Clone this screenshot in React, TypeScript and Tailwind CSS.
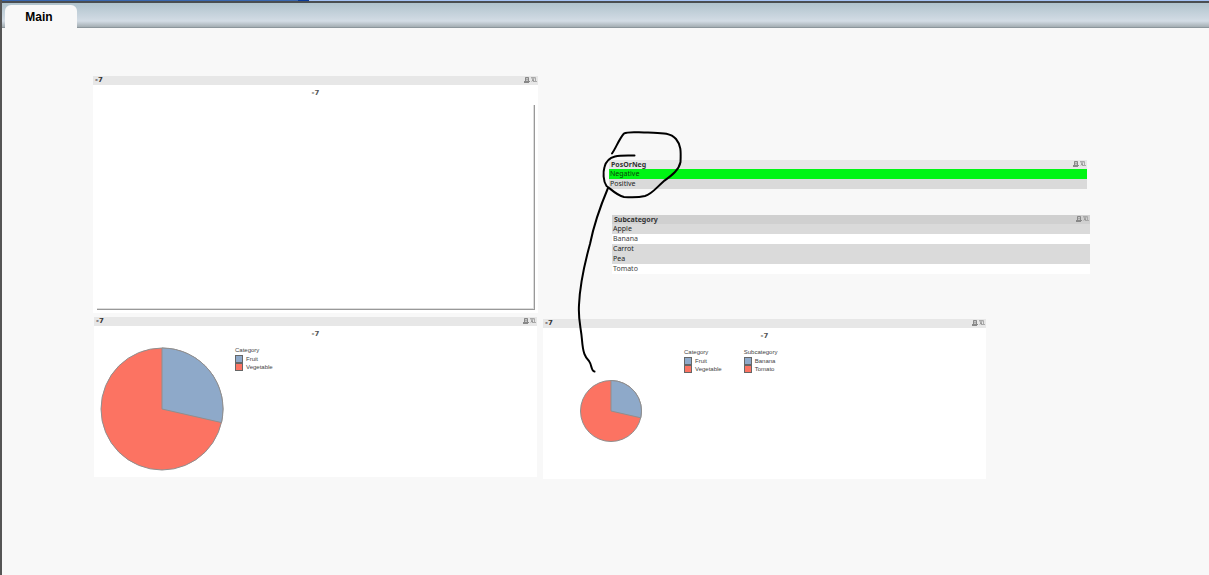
import { useState } from 'react'
import type { ReactNode } from 'react'

interface LegendGroup {
  title: string
  items: string[]
}

const swatches = ['bg-[#8ea9c9]', 'bg-[#fc7362]']

function PrintIcon() {
  return (
    <svg viewBox="0 0 6 6" className="h-[6px] w-[6px]" fill="none" stroke="#888">
      <path d="M1 0h4v4H1z" fill="#c4c4c4" stroke="none" />
      <path d="M1.500 4V.5h3V4" />
      <path d="M0 4.500h6M0 5.500h5" />
      <path d="M2 2.500h2" stroke="#aaa" />
    </svg>
  )
}

function ExcelIcon() {
  return (
    <svg viewBox="0 0 6 6" className="h-[6px] w-[6px]" fill="none" stroke="#aaa">
      <path d="M0 .5h4.500v4M2 4.500h4" />
      <path d="M.8 1l2.400 3.500M3.200 1L.8 4.500" stroke="#999" />
    </svg>
  )
}

function Caption({ title, className }: { title: string; className: string }) {
  return (
    <header className={`flex h-[9px] items-start justify-between pr-px ${className}`}>
      <h2 className="text-[7px] leading-[9px] font-bold text-[#333]">{title}</h2>
      <div className="flex gap-px pt-px">
        <button type="button" aria-label="Print">
          <PrintIcon />
        </button>
        <button type="button" aria-label="Send to Excel">
          <ExcelIcon />
        </button>
      </div>
    </header>
  )
}

function ChartPanel({ className, children }: { className: string; children: ReactNode }) {
  return (
    <section className={`flex flex-col bg-white font-['DejaVu_Sans',sans-serif] ${className}`}>
      <Caption title="-7" className="bg-[#e7e7e7] pl-[2px]" />
      <h3 className="pt-[4px] text-center text-[7px] leading-[9px] font-bold text-[#555]">-7</h3>
      {children}
    </section>
  )
}

// 2 of 7 goes to the first slice, the rest to the second
function Pie({ className }: { className: string }) {
  const angle = (2 / 7) * 2 * Math.PI
  const x = 62 + 61 * Math.sin(angle)
  const y = 62 - 61 * Math.cos(angle)

  return (
    <svg viewBox="0 0 124 124" className={className} stroke="#8f8f8f" strokeWidth="1">
      <circle cx="62" cy="62" r="61" fill="#fc7362" vectorEffect="non-scaling-stroke" />
      <path d={`M62 62V1A61 61 0 0 1 ${x} ${y}Z`} fill="#8ea9c9" vectorEffect="non-scaling-stroke" />
    </svg>
  )
}

function Legend({ title, items }: LegendGroup) {
  return (
    <div className="font-['Liberation_Sans',sans-serif] text-[6px] leading-[8px] text-[#444]">
      <p>{title}</p>
      <ul className="pt-px">
        {items.map((item, i) => (
          <li key={item} className="flex h-[8px] items-center gap-[3px]">
            <span className={`h-[8px] w-[8px] border border-[#666] ${swatches[i]}`} />
            {item}
          </li>
        ))}
      </ul>
    </div>
  )
}

interface ListBoxProps {
  title: string
  items: string[]
  excluded: string[]
  selected?: string
  captionClass: string
  className: string
  onSelect?: (item: string) => void
}

function ListBox({ title, items, excluded, selected, captionClass, className, onSelect }: ListBoxProps) {
  return (
    <section className={className}>
      <Caption title={title} className={captionClass} />
      <ul>
        {items.map((item) => (
          <li key={item}>
            <button
              type="button"
              onClick={() => onSelect?.(item)}
              className={`block h-[10px] w-full pl-px text-left text-[7px] leading-[10px] ${
                item === selected
                  ? 'bg-[#00f514] text-[#0c400c]'
                  : excluded.includes(item)
                    ? 'bg-[#dadada] text-[#222]'
                    : 'bg-white text-[#444]'
              }`}
            >
              {item}
            </button>
          </li>
        ))}
      </ul>
    </section>
  )
}

// Freehand note drawn over the sheet
function Annotation() {
  return (
    <svg
      className="pointer-events-none absolute top-[125px] left-[568px] h-[260px] w-[130px]"
      viewBox="570 125 130 260"
      fill="none"
      stroke="#000"
      strokeWidth="2"
      strokeLinecap="round"
      strokeLinejoin="round"
    >
      <path d="M612 153.500C616 148 619 139 624 133.500C628 131 637 132.500 648 132.500C660 133 670 132 676 139C681 145 681 151 680.500 162C679 170 672 175 664 181C656 188 652 194 645 196C639 197.500 631 197.500 624 197C616 195 611 189 606.500 186C603 181 603 172 604.500 167C606 161 609 158 615 156.500C621 155 628 155.500 634.500 155.500" />
      <path d="M608 188C600 207 594 224 590 244C585 262 580 282 579 305C578 320 581 327 582 340C583 353 585 357 589 361C592 365 591 371 594.500 371.500" />
    </svg>
  )
}

export default function App() {
  const [selected, setSelected] = useState('Negative')

  return (
    <div className="relative flex min-h-screen flex-col border-l-2 border-[#555] bg-[#f8f8f8] font-['Noto_Sans',sans-serif]">
      <div className="flex h-px bg-[#a5c3f5]">
        <div className="w-[296px] bg-[#3a68b0]" />
        <div className="w-[11px] bg-[#0a3a98]" />
      </div>
      <nav className="flex h-[27px] items-end border-t-2 border-b border-t-[#4a4e52] border-b-[#8c969c] bg-linear-to-b from-[#b0c3cd] via-[#d3dce5] via-75% to-[#a4aeb3] pl-[3px]">
        <button
          type="button"
          className="-mb-px h-[23px] w-[72px] rounded-t-[6px] bg-[#f8f8f8] pt-[2px] pr-[4px] font-['Liberation_Sans',sans-serif] text-[12px] leading-[21px] font-bold text-black"
        >
          Main
        </button>
      </nav>

      <main className="grid grid-cols-[445fr_547fr] gap-[5px] pt-[48px] pr-[119px] pl-[91px]">
        <div className="flex flex-col gap-[4px]">
          <ChartPanel className="h-[237px]">
            <div className="mt-[7px] mr-[3px] mb-[3px] ml-[4px] grow border-r border-b border-[#999] shadow-[inset_-1px_-1px_0_#ddd]" />
          </ChartPanel>
          <ChartPanel className="mr-px ml-px h-[160px]">
            <div className="flex items-start gap-[11px] pt-[7px] pl-[6px]">
              <Pie className="mt-px h-[124px] w-[124px]" />
              <Legend title="Category" items={['Fruit', 'Vegetable']} />
            </div>
          </ChartPanel>
        </div>

        <div className="flex flex-col pt-[84px]">
          <ListBox
            title="PosOrNeg"
            items={['Negative', 'Positive']}
            excluded={['Negative', 'Positive']}
            selected={selected}
            captionClass="bg-[#e7e7e7] pl-[2px]"
            className="mr-[3px] ml-[66px]"
            onSelect={setSelected}
          />
          <ListBox
            title="Subcategory"
            items={['Apple', 'Banana', 'Carrot', 'Pea', 'Tomato']}
            excluded={['Apple', 'Carrot', 'Pea']}
            captionClass="bg-[#d0d0d0] pl-[2px]"
            className="mt-[26px] ml-[69px]"
          />
          <ChartPanel className="mt-[45px] mr-[104px] h-[160px]">
            <div className="flex items-start pt-[7px] pl-[37px]">
              <Pie className="mt-[32px] mr-[42px] h-[62px] w-[62px]" />
              <div className="flex gap-[22px]">
                <Legend title="Category" items={['Fruit', 'Vegetable']} />
                <Legend title="Subcategory" items={['Banana', 'Tomato']} />
              </div>
            </div>
          </ChartPanel>
        </div>
      </main>

      <Annotation />
    </div>
  )
}
